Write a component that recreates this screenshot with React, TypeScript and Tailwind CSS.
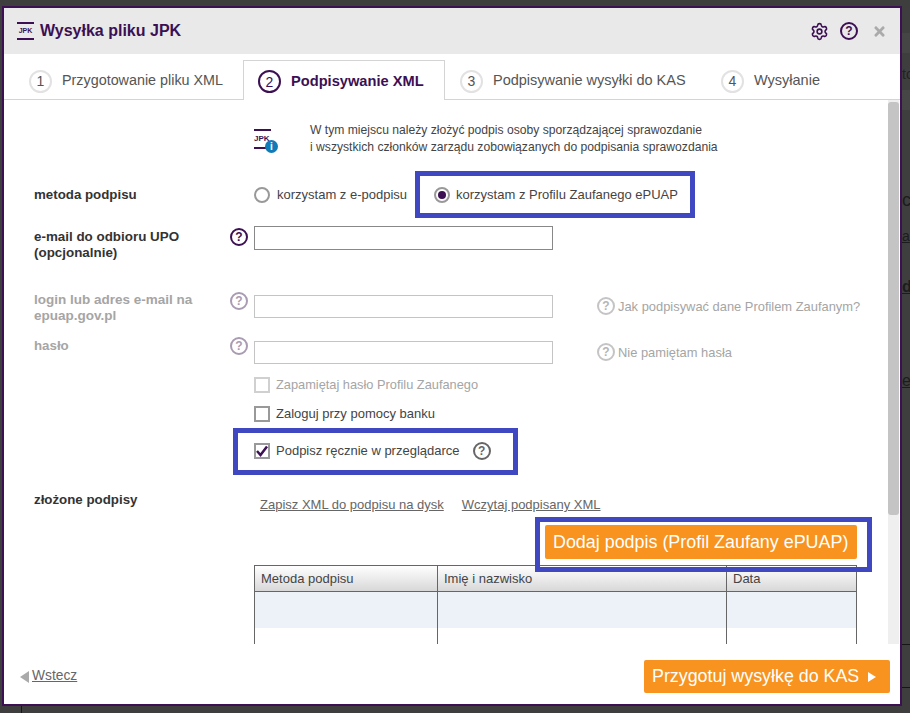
import { ReactNode } from 'react';
import { Settings } from 'lucide-react';
import { FaTimes } from 'react-icons/fa';

function HelpIcon({ className }: { className: string }) {
    return (
        <span className={`w-[18px] h-[18px] shrink-0 flex items-center justify-center rounded-full border-2 text-[12px] font-bold ${className}`}>?</span>
    );
}

function StepNumber({ n }: { n: number }) {
    return (
        <span className="w-[23px] h-[23px] rounded-full border-2 border-[#e2e2e2] flex items-center justify-center text-sm text-[#555]">{n}</span>
    );
}

function Tab({ n, label, className }: { n: number; label: string; className: string }) {
    return (
        <div className={`h-[36px] flex items-center gap-[10px] text-[#555] ${className}`}>
            <StepNumber n={n} />
            {label}
        </div>
    );
}

function Row({ className, label, labelClass, children }: { className: string; label: ReactNode; labelClass?: string; children: ReactNode }) {
    return (
        <div className={`flex ${className}`}>
            <div className={`w-[196px] shrink-0 leading-[16px] font-bold ${labelClass ?? 'text-[13.3px] text-[#333]'}`}>{label}</div>
            {children}
        </div>
    );
}

function Highlight({ className, children }: { className: string; children: ReactNode }) {
    return <div className={`border-[5px] border-[#3f48c0] ${className}`}>{children}</div>;
}

const columns = ['w-[183px]', 'w-[289px]', 'flex-1'];

// kawalki strony widoczne za oknem
function PageBehind() {
    return (
        <>
            <div className="absolute left-[902px] top-[33px] w-[8px] h-[20px] bg-[#454545]" />
            <div className="absolute left-[902px] top-[90px] w-[8px] h-[20px] bg-[#464646]" />
            <span className="absolute left-[902px] top-[64px] text-sm text-[#222]">to</span>
            <span className="absolute left-[902px] top-[186px] text-lg text-[#1c1c1c]">cy</span>
            <span className="absolute left-[902px] top-[226px] text-sm text-[#1c1c1c] underline">a</span>
            <span className="absolute left-[902px] top-[275px] text-base font-bold text-[#1c1c1c] underline">dl</span>
            <span className="absolute left-[902px] top-[369px] text-base text-[#1c1c1c] underline">ec</span>
            <div className="absolute left-[902px] top-[644px] w-[8px] h-px bg-[#161616]" />
            <div className="absolute left-[902px] top-[687px] w-[8px] h-px bg-[#161616]" />
            <div className="absolute left-[21px] top-[706px] w-px h-[7px] bg-[#161616]" />
        </>
    );
}

export default function App() {
    return (
        <div className="relative w-[910px] h-[713px] bg-[#3e3e3e] pt-[6px] pl-[2px] overflow-hidden font-['Liberation_Sans',Arial,sans-serif]">
            <PageBehind />
            <div className="relative w-[900px] h-[700px] bg-white border-2 border-[#3c1053] flex flex-col">
                <header className="h-[46px] shrink-0 bg-[#e9e9e9] flex items-center pl-[13px] pr-[13px]">
                    <div className="w-[17px] h-[18px] border-y-2 border-[#3c1053] flex items-center justify-center text-[7px] font-bold text-[#3c1053]">JPK</div>
                    <h1 className="ml-[6px] text-base font-bold text-[#3c1053]">Wysyłka pliku JPK</h1>
                    <Settings size={19} className="ml-auto text-[#3c1053]" />
                    <HelpIcon className="ml-[11px] border-[#3c1053] text-[#3c1053]" />
                    <FaTimes size={15} className="ml-[14px] text-[#aaaaaa]" />
                </header>

                <nav className="h-[46px] shrink-0 flex items-end border-b border-[#d4d4d4]">
                    <Tab n={1} label="Przygotowanie pliku XML" className="ml-[25px] w-[214px] text-[14.35px]" />
                    <div className="h-[40px] w-[202px] -mb-px bg-white border border-b-0 border-[#d4d4d4] flex items-center gap-[10px] pl-[14px] pt-[2px] text-[14.65px] font-bold text-[#3c1053]">
                        <span className="w-[23px] h-[23px] rounded-full border-2 border-[#3c1053] flex items-center justify-center text-sm font-normal">2</span>
                        Podpisywanie XML
                    </div>
                    <Tab n={3} label="Podpisywanie wysyłki do KAS" className="ml-[15px] w-[261px] text-[14.5px]" />
                    <Tab n={4} label="Wysyłanie" className="text-[14.5px]" />
                </nav>

                <div className="h-[544px] shrink-0 flex">
                    <main className="flex-1 min-w-0 pl-[30px] overflow-hidden">
                        <div className="flex items-start pl-[220px] pt-[22px] h-[71px]">
                            <div className="relative w-[17px] h-[20px] mt-[7px] border-y-2 border-[#3c1053] flex items-center text-[8px] font-bold text-[#3c1053]">
                                JPK
                                <span className="absolute -right-[7px] -bottom-[6px] w-[13px] h-[13px] rounded-full bg-[#0f7cb8] text-white text-[10px] flex items-center justify-center">i</span>
                            </div>
                            <p className="ml-[39px] text-[12.15px] leading-[17px] text-[#444]">
                                W tym miejscu należy złożyć podpis osoby sporządzającej sprawozdanie<br />
                                i wszystkich członków zarządu zobowiązanych do podpisania sprawozdania
                            </p>
                        </div>

                        <Row className="items-center h-[47px]" label="metoda podpisu">
                            <div className="w-[16px] h-[16px] ml-[24px] rounded-full border-2 border-[#999]" />
                            <span className="ml-[7px] text-[13px] text-[#444]">korzystam z e-podpisu</span>
                            <Highlight className="ml-[8px] h-[47px] w-[280px] pl-[14px] flex items-center gap-[6px] text-[13px] text-[#444]">
                                <span className="w-[16px] h-[16px] rounded-full border-2 border-[#999] flex items-center justify-center">
                                    <span className="w-[8px] h-[8px] rounded-full bg-[#3c1053]" />
                                </span>
                                korzystam z Profilu Zaufanego ePUAP
                            </Highlight>
                        </Row>

                        <Row className="mt-[8px] h-[66px]" labelClass="pt-[3px] text-[13.4px] text-[#333]" label={<>e-mail do odbioru UPO<br />(opcjonalnie)</>}>
                            <HelpIcon className="mt-[2px] border-[#3c1053] text-[#3c1053]" />
                            <div className="ml-[6px] w-[299px] h-[24px] border border-[#888]" />
                        </Row>

                        <Row className="h-[46px]" labelClass="text-[13.5px] text-[#a5a5a5]" label={<>login lub adres e-mail na<br />epuap.gov.pl</>}>
                            <HelpIcon className="border-[#a99bb2] text-[#a99bb2]" />
                            <div className="ml-[6px] mt-[3px] w-[299px] h-[23px] border border-[#c4c4c4]" />
                            <HelpIcon className="ml-[44px] mt-[5px] border-[#c4c4c4] text-[#b5b5b5]" />
                            <span className="ml-[3px] mt-[5px] text-[12.9px] text-[#a5a5a5]">Jak podpisywać dane Profilem Zaufanym?</span>
                        </Row>

                        <Row className="h-[33px]" labelClass="text-[13.3px] text-[#a5a5a5]" label="hasło">
                            <HelpIcon className="-mt-px border-[#a99bb2] text-[#a99bb2]" />
                            <div className="ml-[6px] mt-[3px] w-[299px] h-[23px] border border-[#c4c4c4]" />
                            <HelpIcon className="ml-[44px] mt-[5px] border-[#c4c4c4] text-[#b5b5b5]" />
                            <span className="ml-[3px] mt-[5px] text-[12.9px] text-[#a5a5a5]">Nie pamiętam hasła</span>
                        </Row>

                        <div className="pl-[220px] flex flex-col items-start">
                            <div className="flex items-center h-[28px] gap-[6px] text-[12.8px] text-[#a5a5a5]">
                                <span className="w-[16px] h-[16px] border-2 border-[#d0d0d0]" />
                                Zapamiętaj hasło Profilu Zaufanego
                            </div>
                            <div className="flex items-center h-[30px] gap-[6px] text-[13px] text-[#444]">
                                <span className="w-[16px] h-[16px] border-2 border-[#999]" />
                                Zaloguj przy pomocy banku
                            </div>
                            <Highlight className="-ml-[21px] -mt-px w-[285px] h-[47px] pl-[16px] pb-[2px] flex items-center gap-[6px] text-[13px] text-[#444]">
                                <span className="w-[16px] h-[16px] border-2 border-[#999] flex items-center justify-center">
                                    <svg width="12" height="12" viewBox="0 0 12 12"><path d="M1 6l3.5 4L11 1.5" fill="none" stroke="#3c1053" strokeWidth="2.5" /></svg>
                                </span>
                                Podpisz ręcznie w przeglądarce
                                <HelpIcon className="ml-[7px] border-[#666] text-[#666]" />
                            </Highlight>
                        </div>

                        <Row className="mt-[17px]" label="złożone podpisy">
                            <div className="flex-1">
                                <div className="flex gap-[18px] pl-[30px] pt-[5px] text-[13px] leading-[15px] text-[#666] underline">
                                    <span>Zapisz XML do podpisu na dysk</span>
                                    <span>Wczytaj podpisany XML</span>
                                </div>
                                <Highlight className="relative z-10 ml-[305px] mt-[5px] w-[337px] h-[55px] pl-[5px] pt-[3px]">
                                    <button className="w-[312px] h-[34px] pl-[8px] bg-[#f7931e] rounded-[2px] text-white text-[17.9px] text-left">
                                        Dodaj podpis (Profil Zaufany ePUAP)
                                    </button>
                                </Highlight>
                                <div className="ml-[24px] -mt-[7px] w-[603px] border-x border-[#666] text-[13px] text-[#444]">
                                    <div className="flex h-[27px] border-y border-[#666] bg-gradient-to-b from-white to-[#d8d8d8]">
                                        {['Metoda podpisu', 'Imię i nazwisko', 'Data'].map((title, i) => (
                                            <div key={title} className={`${columns[i]} pl-[6px] leading-[25px] ${i < 2 ? 'border-r border-[#666]' : ''}`}>{title}</div>
                                        ))}
                                    </div>
                                    <div className="flex h-[36px] bg-[#edf2f9]">
                                        {columns.map((col, i) => (
                                            <div key={col} className={`${col} ${i < 2 ? 'border-r border-[#666]' : ''}`} />
                                        ))}
                                    </div>
                                    <div className="flex h-[37px]">
                                        {columns.map((col, i) => (
                                            <div key={col} className={`${col} ${i < 2 ? 'border-r border-[#666]' : ''}`} />
                                        ))}
                                    </div>
                                </div>
                            </div>
                        </Row>
                    </main>
                    {/* scrollbar */}
                    <div className="w-[12px] shrink-0 pr-px">
                        <div className="h-full bg-[#efefef] pt-[2px]">
                            <div className="h-[413px] bg-[#c4c4c4] rounded-[3px]" />
                        </div>
                    </div>
                </div>

                <footer className="h-[60px] shrink-0 flex items-center justify-between pl-[16px] pr-[10px] pt-[5px]">
                    <div className="flex items-center text-[13.8px] text-[#666]">
                        <span className="w-0 h-0 border-y-[6px] border-y-transparent border-r-[9px] border-r-[#aaa]" />
                        <span className="ml-[3px] underline">Wstecz</span>
                    </div>
                    <button className="h-[33px] w-[246px] pl-[8px] bg-[#f7931e] rounded-[2px] text-white text-[17.85px] flex items-center">
                        Przygotuj wysyłkę do KAS
                        <span className="ml-[9px] w-0 h-0 border-y-[5px] border-y-transparent border-l-[8px] border-l-white" />
                    </button>
                </footer>
            </div>
        </div>
    );
}
